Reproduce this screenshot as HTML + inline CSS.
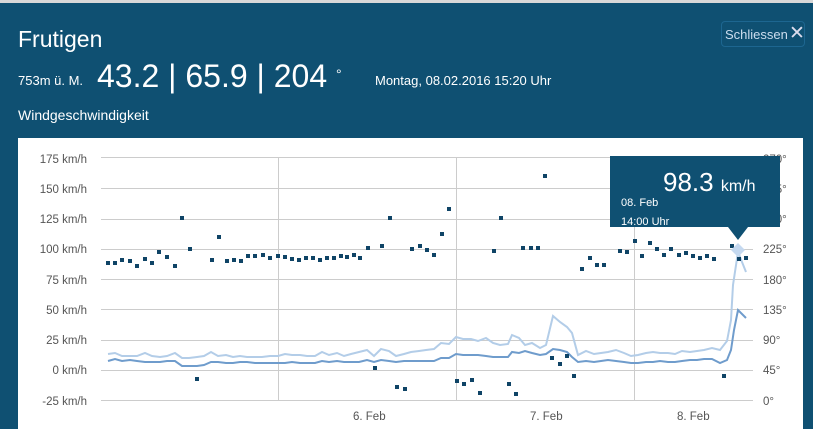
<!DOCTYPE html>
<html><head><meta charset="utf-8"><style>
body{margin:0;width:813px;height:429px;overflow:hidden;background:#0f5072;font-family:"Liberation Sans",sans-serif;color:#fff;position:relative}
.t{position:absolute;white-space:nowrap}
</style></head><body>
<div style="position:absolute;left:0;top:0;width:813px;height:3px;background:#d8d8d8"></div>
<div class="t" style="left:18px;top:26px;font-size:23px">Frutigen</div>
<div class="t" style="left:18px;top:73px;font-size:13px">753m ü. M.</div>
<div class="t" style="left:97px;top:58px;font-size:32px;font-weight:300">43.2 | 65.9 | 204 <span style="font-size:14px;vertical-align:top;position:relative;top:8px">°</span></div>
<div class="t" style="left:375px;top:73px;font-size:13px">Montag, 08.02.2016 15:20 Uhr</div>
<div class="t" style="left:18px;top:107px;font-size:14px">Windgeschwindigkeit</div>
<div style="position:absolute;left:721px;top:21px;width:84px;height:26px;border:1.5px solid #1d6690;border-radius:4px;box-sizing:border-box"></div>
<div class="t" style="left:725px;top:27px;font-size:13px;color:#cde">Schliessen</div>
<div class="t" style="left:789px;top:22px;font-size:19px;color:#dde">✕</div>
<div style="position:absolute;left:18px;top:138px;width:785px;height:291px;background:#fff"></div>
<svg style="position:absolute;left:0;top:0" width="813" height="429" font-family="Liberation Sans, sans-serif" font-size="11.5" fill="#555">
<g stroke="#ccc" stroke-width="1">
<line x1="101" x2="753" y1="157.5" y2="157.5"/><line x1="101" x2="753" y1="188.5" y2="188.5"/><line x1="101" x2="753" y1="219.5" y2="219.5"/><line x1="101" x2="753" y1="249.5" y2="249.5"/><line x1="101" x2="753" y1="279.5" y2="279.5"/><line x1="101" x2="753" y1="309.5" y2="309.5"/><line x1="101" x2="753" y1="340.5" y2="340.5"/><line x1="101" x2="753" y1="370.5" y2="370.5"/><line x1="101" x2="753" y1="400.5" y2="400.5"/>
<line x1="278.5" x2="278.5" y1="157" y2="400"/><line x1="456.5" x2="456.5" y1="157" y2="400"/><line x1="634.5" x2="634.5" y1="157" y2="400"/>
</g>
<g text-anchor="end">
<text x="87" y="163">175 km/h</text><text x="87" y="193">150 km/h</text><text x="87" y="223">125 km/h</text><text x="87" y="253">100 km/h</text><text x="87" y="284">75 km/h</text><text x="87" y="314">50 km/h</text><text x="87" y="344">25 km/h</text><text x="87" y="374">0 km/h</text><text x="87" y="405">-25 km/h</text>
</g>
<g>
<text x="763" y="163">270°</text><text x="763" y="193">255°</text><text x="763" y="223">240°</text><text x="763" y="253">225°</text><text x="763" y="284">180°</text><text x="763" y="314">135°</text><text x="763" y="344">90°</text><text x="763" y="374">45°</text><text x="763" y="405">0°</text>
<text x="353" y="420">6. Feb</text><text x="530" y="420">7. Feb</text><text x="677" y="420">8. Feb</text>
</g>
<polyline fill="none" stroke="#b3cde8" stroke-width="2" points="108,354 115,353 122,356 130,356 137,356 145,353 152,356 160,357 167,356 175,353 182,358 189,358 197,357 204,356 211,352 218,356 226,355 233,357 240,356 247,357 255,357 262,357 270,356 278,356 285,354 292,355 300,355 307,356 315,356 322,352 329,355 337,353 344,356 351,354 359,352 367,350 374,356 381,349 389,351 396,356 404,354 411,352 419,351 426,350 434,349 441,343 449,344 456,337 463,339 471,339 478,341 486,338 493,343 500,345 508,344 512,335 519,338 525,345 532,343 540,348 546,345 553,316 560,322 567,327 572,333 578,355 586,351 594,354 601,353 608,352 616,350 624,353 631,356 638,355 646,353 653,352 660,353 668,353 675,354 682,351 690,352 697,351 704,350 712,348 720,350 727,341 731,320 733,285 738,252 746,272"/>
<polyline fill="none" stroke="#6f9ccc" stroke-width="2" points="108,361 115,359 122,361 130,360 137,361 145,362 152,362 160,362 167,361 175,361 182,366 189,366 197,366 204,365 211,362 218,362 226,363 233,363 240,362 247,362 255,363 262,363 270,363 278,363 285,363 292,362 300,363 307,363 315,363 322,361 329,362 337,361 344,362 351,362 359,362 367,360 374,362 381,360 389,361 396,362 404,361 411,361 419,361 426,361 434,361 441,358 449,358 456,354 463,355 471,355 478,355 486,356 493,357 500,357 508,357 512,352 519,353 525,351 532,353 540,355 546,354 553,349 560,350 567,352 572,357 578,362 586,361 594,362 601,361 608,360 616,361 624,362 631,363 638,363 646,362 653,362 660,361 668,362 675,362 682,361 690,360 697,360 704,359 712,359 720,363 727,360 731,350 734,330 738,310 746,318"/>
<g fill="#0f4466">
<script></script>
<rect x="106" y="261" width="4" height="4"/><rect x="113" y="261" width="4" height="4"/><rect x="120" y="258" width="4" height="4"/><rect x="128" y="259" width="4" height="4"/><rect x="135" y="264" width="4" height="4"/><rect x="143" y="257" width="4" height="4"/><rect x="150" y="261" width="4" height="4"/><rect x="157" y="250" width="4" height="4"/><rect x="165" y="255" width="4" height="4"/><rect x="173" y="264" width="4" height="4"/><rect x="180" y="216" width="4" height="4"/><rect x="188" y="247" width="4" height="4"/><rect x="195" y="377" width="4" height="4"/><rect x="210" y="258" width="4" height="4"/><rect x="217" y="235" width="4" height="4"/><rect x="225" y="259" width="4" height="4"/><rect x="232" y="258" width="4" height="4"/><rect x="239" y="259" width="4" height="4"/><rect x="246" y="254" width="4" height="4"/><rect x="253" y="254" width="4" height="4"/><rect x="261" y="253" width="4" height="4"/><rect x="268" y="256" width="4" height="4"/><rect x="276" y="254" width="4" height="4"/><rect x="283" y="255" width="4" height="4"/><rect x="290" y="257" width="4" height="4"/><rect x="297" y="258" width="4" height="4"/><rect x="304" y="256" width="4" height="4"/><rect x="311" y="256" width="4" height="4"/><rect x="318" y="258" width="4" height="4"/><rect x="325" y="256" width="4" height="4"/><rect x="332" y="256" width="4" height="4"/><rect x="339" y="254" width="4" height="4"/><rect x="345" y="255" width="4" height="4"/><rect x="352" y="253" width="4" height="4"/><rect x="358" y="256" width="4" height="4"/><rect x="366" y="246" width="4" height="4"/><rect x="373" y="366" width="4" height="4"/><rect x="380" y="244" width="4" height="4"/><rect x="388" y="216" width="4" height="4"/><rect x="395" y="385" width="4" height="4"/><rect x="403" y="387" width="4" height="4"/><rect x="410" y="247" width="4" height="4"/><rect x="418" y="244" width="4" height="4"/><rect x="425" y="248" width="4" height="4"/><rect x="432" y="253" width="4" height="4"/><rect x="440" y="232" width="4" height="4"/><rect x="447" y="207" width="4" height="4"/><rect x="455" y="379" width="4" height="4"/><rect x="462" y="382" width="4" height="4"/><rect x="470" y="378" width="4" height="4"/><rect x="478" y="391" width="4" height="4"/><rect x="492" y="249" width="4" height="4"/><rect x="499" y="216" width="4" height="4"/><rect x="507" y="382" width="4" height="4"/><rect x="514" y="392" width="4" height="4"/><rect x="521" y="246" width="4" height="4"/><rect x="529" y="246" width="4" height="4"/><rect x="536" y="246" width="4" height="4"/><rect x="543" y="174" width="4" height="4"/><rect x="550" y="356" width="4" height="4"/><rect x="558" y="362" width="4" height="4"/><rect x="565" y="354" width="4" height="4"/><rect x="572" y="374" width="4" height="4"/><rect x="580" y="267" width="4" height="4"/><rect x="588" y="256" width="4" height="4"/><rect x="595" y="263" width="4" height="4"/><rect x="602" y="263" width="4" height="4"/><rect x="618" y="249" width="4" height="4"/><rect x="625" y="250" width="4" height="4"/><rect x="633" y="239" width="4" height="4"/><rect x="640" y="254" width="4" height="4"/><rect x="648" y="241" width="4" height="4"/><rect x="655" y="247" width="4" height="4"/><rect x="662" y="253" width="4" height="4"/><rect x="669" y="247" width="4" height="4"/><rect x="677" y="253" width="4" height="4"/><rect x="684" y="251" width="4" height="4"/><rect x="691" y="254" width="4" height="4"/><rect x="698" y="256" width="4" height="4"/><rect x="705" y="254" width="4" height="4"/><rect x="712" y="257" width="4" height="4"/><rect x="722" y="374" width="4" height="4"/><rect x="730" y="244" width="4" height="4"/><rect x="737" y="257" width="4" height="4"/><rect x="744" y="256" width="4" height="4"/>
</g>
<polygon points="738,243 745,250 738,257 731,250" fill="#c5d9f0"/>
<polygon points="610,156 780,156 780,227 748,227 738,240 728,227 610,227" fill="#0f5072"/>
<text x="663" y="191" font-size="26" fill="#fff">98.3 <tspan font-size="16">km/h</tspan></text>
<text x="621" y="206" font-size="11" fill="#fff">08. Feb</text>
<text x="621" y="225" font-size="11" fill="#fff">14:00 Uhr</text>
</svg>
</body></html>
